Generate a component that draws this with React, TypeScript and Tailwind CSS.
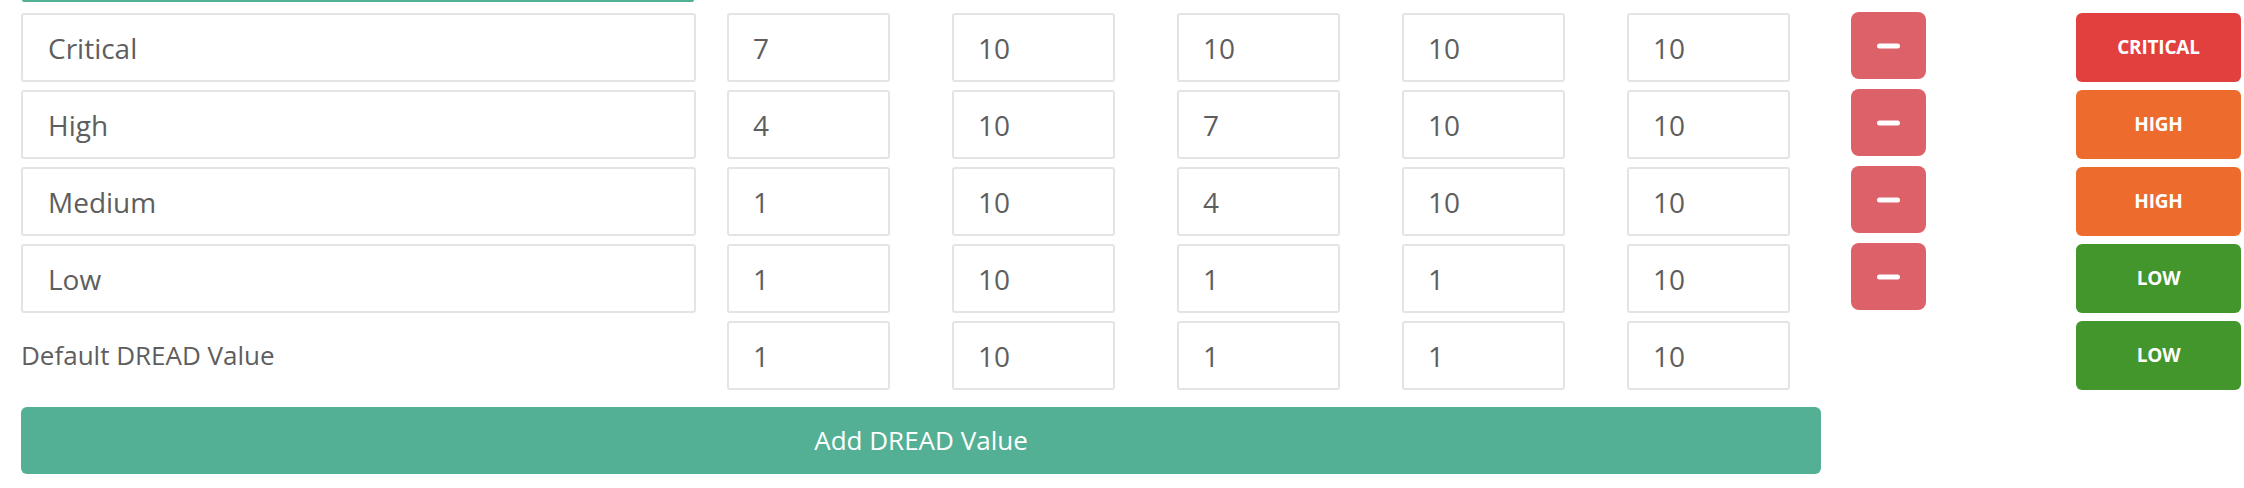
import React from 'react';

type Rating = {
  name: string;
  values: number[];
  level: 'CRITICAL' | 'HIGH' | 'LOW';
};

const ratings: Rating[] = [
  { name: 'Critical', values: [7, 10, 10, 10, 10], level: 'CRITICAL' },
  { name: 'High', values: [4, 10, 7, 10, 10], level: 'HIGH' },
  { name: 'Medium', values: [1, 10, 4, 10, 10], level: 'HIGH' },
  { name: 'Low', values: [1, 10, 1, 1, 10], level: 'LOW' },
];

const defaultValues = [1, 10, 1, 1, 10];

function levelColor(level: Rating['level']) {
  if (level === 'CRITICAL') return 'bg-[#e23f3f]';
  if (level === 'HIGH') return 'bg-[#ed6b2d]';
  return 'bg-[#43962b]';
}

function ValueInputs({ values }: { values: number[] }) {
  return (
    <>
      {values.map((v, i) => (
        <input
          key={i}
          readOnly
          defaultValue={v}
          className={`${i === 0 ? '' : 'ml-[62px]'} w-[163px] h-[69px] shrink-0 border-2 border-[#e4e4e4] rounded-[3px] bg-white pl-[24px] text-[28px] text-[#5e5e5e] outline-none`}
        />
      ))}
    </>
  );
}

function LevelBadge({ level }: { level: Rating['level'] }) {
  return (
    <button
      className={`${levelColor(level)} ml-[150px] w-[165px] h-[69px] shrink-0 rounded-[6px] text-white text-[19px] font-bold tracking-[-0.2px]`}
    >
      {level}
    </button>
  );
}

export default function App() {
  return (
    <div className="w-[2244px] h-[488px] bg-white font-['Open_Sans',sans-serif] overflow-hidden">
      {/* tail of the button above */}
      <div className="ml-[22px] w-[672px] h-[2px] bg-[#53b095] rounded-b-[2px]" />

      <div className="pl-[21px] pt-[11px] flex flex-col gap-[8px]">
        {ratings.map((r) => (
          <div key={r.name} className="flex items-start">
            <input
              readOnly
              defaultValue={r.name}
              className="w-[675px] h-[69px] shrink-0 border-2 border-[#e4e4e4] rounded-[3px] bg-white pl-[25px] text-[28px] text-[#5e5e5e] outline-none mr-[31px]"
            />
            <ValueInputs values={r.values} />
            <button className="ml-[61px] w-[75px] h-[67px] -mt-[1px] shrink-0 rounded-[8px] bg-[#dd6168] flex items-center justify-center">
              <svg width="23" height="6" viewBox="0 0 23 6">
                <rect x="0" y="0.5" width="23" height="5" rx="2.5" fill="#ffffff" />
              </svg>
            </button>
            <LevelBadge level={r.level} />
          </div>
        ))}

        {/* default row */}
        <div className="flex items-center">
          <div className="w-[675px] mr-[31px] shrink-0 text-[26px] text-[#5e5e5e]">Default DREAD Value</div>
          <ValueInputs values={defaultValues} />
          <div className="ml-[61px] w-[75px] shrink-0" />
          <LevelBadge level="LOW" />
        </div>
      </div>

      <div className="pl-[21px] pt-[17px]">
        <button className="w-[1800px] h-[67px] rounded-[6px] bg-[#53b095] text-white text-[26px]">
          Add DREAD Value
        </button>
      </div>
    </div>
  );
}
